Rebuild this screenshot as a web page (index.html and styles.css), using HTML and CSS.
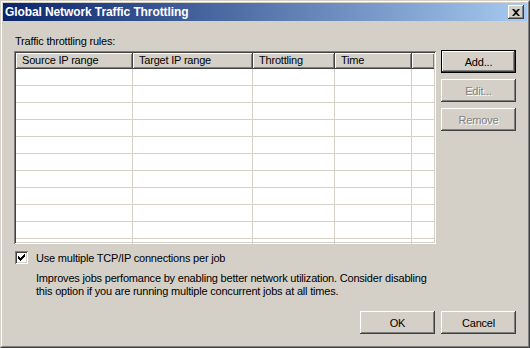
FILE: index.html
```html
<!DOCTYPE html>
<html lang="en">
<head>
  <meta charset="UTF-8">
  <title>Global Network Traffic Throttling</title>
  <link rel="stylesheet" href="styles.css">
</head>
<body>
  <div class="window">
    <div class="frame">
      <div class="titlebar">
        <span class="title">Global Network Traffic Throttling</span>
        <button class="close" type="button">
          <svg width="8" height="7" viewBox="0 0 8 7">
            <path d="M0 0h2l2 2 2-2h2L5 3.5 8 7H6L4 5 2 7H0l3-3.5z" fill="#000"/>
          </svg>
        </button>
      </div>

      <div class="content">
        <div class="rules">
          <div class="rules-left">
            <div class="caption">Traffic throttling rules:</div>
            <div class="list">
              <div class="list-head">
                <div class="col c1">Source IP range</div>
                <div class="col c2">Target IP range</div>
                <div class="col c3">Throttling</div>
                <div class="col c4">Time</div>
                <div class="col c5"></div>
              </div>
              <div class="list-row"><div class="cell c1"></div><div class="cell c2"></div><div class="cell c3"></div><div class="cell c4"></div><div class="cell c5"></div></div>
              <div class="list-row"><div class="cell c1"></div><div class="cell c2"></div><div class="cell c3"></div><div class="cell c4"></div><div class="cell c5"></div></div>
              <div class="list-row"><div class="cell c1"></div><div class="cell c2"></div><div class="cell c3"></div><div class="cell c4"></div><div class="cell c5"></div></div>
              <div class="list-row"><div class="cell c1"></div><div class="cell c2"></div><div class="cell c3"></div><div class="cell c4"></div><div class="cell c5"></div></div>
              <div class="list-row"><div class="cell c1"></div><div class="cell c2"></div><div class="cell c3"></div><div class="cell c4"></div><div class="cell c5"></div></div>
              <div class="list-row"><div class="cell c1"></div><div class="cell c2"></div><div class="cell c3"></div><div class="cell c4"></div><div class="cell c5"></div></div>
              <div class="list-row"><div class="cell c1"></div><div class="cell c2"></div><div class="cell c3"></div><div class="cell c4"></div><div class="cell c5"></div></div>
              <div class="list-row"><div class="cell c1"></div><div class="cell c2"></div><div class="cell c3"></div><div class="cell c4"></div><div class="cell c5"></div></div>
              <div class="list-row"><div class="cell c1"></div><div class="cell c2"></div><div class="cell c3"></div><div class="cell c4"></div><div class="cell c5"></div></div>
              <div class="list-row"><div class="cell c1"></div><div class="cell c2"></div><div class="cell c3"></div><div class="cell c4"></div><div class="cell c5"></div></div>
              <div class="list-row"><div class="cell c1"></div><div class="cell c2"></div><div class="cell c3"></div><div class="cell c4"></div><div class="cell c5"></div></div>
            </div>
          </div>
          <div class="side-buttons">
            <button class="btn default" type="button">Add...</button>
            <button class="btn" type="button" disabled>Edit...</button>
            <button class="btn" type="button" disabled>Remove</button>
          </div>
        </div>

        <label class="check-row">
          <span class="checkbox">
            <svg width="7" height="7" viewBox="0 0 7 7">
              <path d="M0 2h1v1h1v1h1V3h1V2h1V1h1V0h1v3H6v1H5v1H4v1H3v1H2V6H1V5H0z" fill="#000"/>
            </svg>
          </span>
          <span>Use multiple TCP/IP connections per job</span>
        </label>
        <p class="hint">Improves jobs perfomance by enabling better network utilization. Consider disabling<br>this option if you are running multiple concurrent jobs at all times.</p>

        <div class="footer">
          <button class="btn" type="button">OK</button>
          <button class="btn" type="button">Cancel</button>
        </div>
      </div>
    </div>
  </div>
</body>
</html>
```

FILE: styles.css
```css
html, body {
  margin: 0;
  padding: 0;
  background: #d4d0c8;
}
body {
  font-family: "Liberation Sans", Arial, sans-serif;
  font-size: 11px;
  letter-spacing: -0.2px;
  color: #000;
}
.window {
  width: 530px;
  height: 348px;
  box-sizing: border-box;
  border: 1px solid;
  border-color: #d4d0c8 #404040 #404040 #d4d0c8;
}
.frame {
  height: 100%;
  box-sizing: border-box;
  border: 1px solid;
  border-color: #fff #808080 #808080 #fff;
  padding: 1px;
  display: flex;
  flex-direction: column;
}
.titlebar {
  height: 18px;
  flex: none;
  display: flex;
  align-items: center;
  justify-content: space-between;
  padding: 0 2px 0 2px;
  background: linear-gradient(to right, #0a246a, #a6caf0);
}
.title {
  color: #fff;
  font-weight: bold;
  font-size: 12px;
  letter-spacing: -0.1px;
}
.close {
  width: 16px;
  height: 14px;
  padding: 0;
  margin-right: 1px;
  border: none;
  background: #d4d0c8;
  box-shadow: inset -1px -1px #404040, inset 1px 1px #fff, inset -2px -2px #808080;
  display: flex;
  align-items: center;
  justify-content: center;
}
.content {
  flex: 1;
  display: flex;
  flex-direction: column;
  padding: 14px 11px 0 11px;
}
.rules {
  display: flex;
  gap: 5px;
}
.caption {
  height: 13px;
  line-height: 13px;
  margin: 0 0 3px 1px;
}
.list {
  width: 422px;
  height: 193px;
  box-sizing: border-box;
  background: #fff;
  overflow: hidden;
  box-shadow: inset 1px 1px #808080, inset -1px -1px #fff, inset 2px 2px #404040, inset -2px -2px #d4d0c8;
  padding: 2px;
}
.list-head {
  display: flex;
  height: 16px;
  background: #d4d0c8;
}
.col {
  height: 16px;
  line-height: 15px;
  box-sizing: border-box;
  padding-left: 6px;
  white-space: nowrap;
  box-shadow: inset 1px 1px #fff, inset -1px -1px #808080;
  border-right: 1px solid #404040;
  border-bottom: 1px solid #404040;
}
.c1 { width: 117px; }
.c2 { width: 120px; }
.c3 { width: 82px; }
.c4 { width: 77px; }
.c5 { flex: 1; border-right: none; }
.list-row {
  display: flex;
  height: 17px;
  box-sizing: border-box;
  border-bottom: 1px solid #d4d0c8;
}
.cell {
  box-sizing: border-box;
  border-right: 1px solid #d4d0c8;
}
.cell.c5 { border-right: none; }
.side-buttons {
  display: flex;
  flex-direction: column;
  gap: 6px;
  padding-top: 15px;
}
.btn {
  width: 75px;
  height: 23px;
  padding: 0;
  border: none;
  background: #d4d0c8;
  font-family: inherit;
  font-size: 11px;
  letter-spacing: inherit;
  color: #000;
  box-shadow: inset -1px -1px #404040, inset 1px 1px #fff, inset -2px -2px #808080;
}
.btn.default {
  box-shadow: inset 0 0 0 1px #000, inset -2px -2px #404040, inset 2px 2px #fff, inset -3px -3px #808080;
}
.btn:disabled {
  color: #808080;
  text-shadow: 1px 1px #fff;
}
.check-row {
  display: flex;
  align-items: center;
  gap: 8px;
  margin-top: 7px;
  height: 13px;
  padding-left: 1px;
}
.checkbox {
  width: 13px;
  height: 13px;
  box-sizing: border-box;
  background: #fff;
  box-shadow: inset 1px 1px #808080, inset -1px -1px #fff, inset 2px 2px #404040, inset -2px -2px #d4d0c8;
  display: flex;
  align-items: center;
  justify-content: center;
}
.hint {
  margin: 8px 0 0 22px;
  line-height: 13px;
}
.footer {
  margin-top: auto;
  margin-bottom: 11px;
  display: flex;
  justify-content: flex-end;
  gap: 6px;
}
```
